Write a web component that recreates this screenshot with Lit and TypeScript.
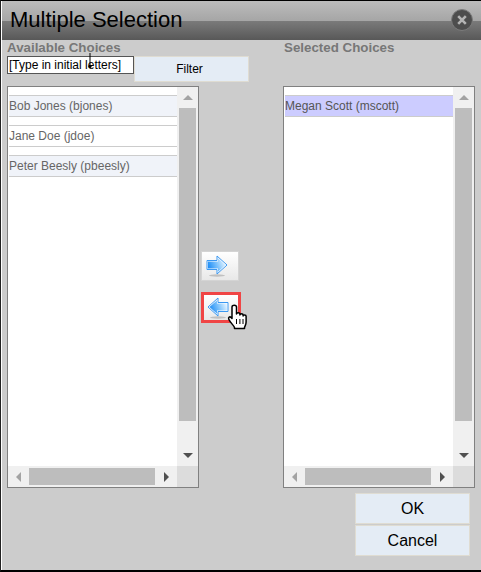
import { LitElement, html, css, svg } from "lit";
import { customElement } from "lit/decorators.js";

const tri = (dir: string, fill: string) => {
  const pts: Record<string, string> = {
    up: "1,7 6,2 11,7",
    down: "1,2 6,7 11,2",
    left: "7,1 2,6 7,11",
    right: "2,1 7,6 2,11",
  };
  const vertical = dir === "up" || dir === "down";
  return html`<svg class="tri" width="${vertical ? 12 : 9}" height="${vertical ? 9 : 12}">${svg`<polygon points=${pts[dir]} fill=${fill}></polygon>`}</svg>`;
};

const arrow = (left: boolean) => {
  const id = left ? "gl" : "gr";
  const outer = left
    ? "22,6.5 12,6.5 12,2 2,11 12,20 12,15.5 22,15.5"
    : "2,6.5 12,6.5 12,2 22,11 12,20 12,15.5 2,15.5";
  const inner = left
    ? "21,7.5 11,7.5 11,4.2 3.5,11 11,17.8 11,14.5 21,14.5"
    : "3,7.5 13,7.5 13,4.2 20.5,11 13,17.8 13,14.5 3,14.5";
  return html`<svg class="arrow" width="24" height="24" viewBox="0 0 24 24">
    <defs>
      <linearGradient id=${id} x1="0" y1="0.6" x2="1" y2="0.3">
        <stop offset="0" stop-color="#1c8cf5"></stop>
        <stop offset="0.5" stop-color="#7cc2fc"></stop>
        <stop offset="1" stop-color="#eaf6ff"></stop>
      </linearGradient>
    </defs>
    <ellipse cx="12" cy="21.5" rx="8" ry="1.2" fill="#c0c0c0"></ellipse>
    <polygon points=${outer} fill="#fff" stroke="#3a98f2" stroke-width="1" stroke-linejoin="round"></polygon>
    <polygon points=${inner} fill="url(#${id})"></polygon>
  </svg>`;
};

@customElement("app-root")
export class AppRoot extends LitElement {
  static styles = css`
    :host {
      display: block;
      width: 481px;
      height: 572px;
      font-family: "Liberation Sans", Arial, sans-serif;
    }
    * {
      box-sizing: border-box;
    }
    .frame {
      position: relative;
      width: 481px;
      height: 572px;
      background: #cccccc;
      border-top: 1px solid #000;
      border-bottom: 2px solid #000;
      border-left: 1px solid #222;
      padding-left: 1px;
      box-shadow: inset 1px 0 0 #fff;
      display: flex;
      flex-direction: column;
    }
    .title {
      height: 39px;
      flex: none;
      display: flex;
      align-items: center;
      justify-content: space-between;
      padding: 0 8px 1px 8px;
      background: linear-gradient(
        #bcbcbc 0,
        #a6a6a6 50%,
        #7a7a7a 52%,
        #585858 100%
      );
    }
    .title h1 {
      margin: 0;
      font-size: 22px;
      font-weight: 400;
      color: #000;
      line-height: 38px;
    }
    .close {
      width: 22px;
      height: 22px;
      display: block;
    }
    .main {
      display: grid;
      grid-template-columns: 192px 84px 192px;
      padding: 0 0 0 5px;
      flex: none;
      height: 449px;
    }
    .col {
      display: flex;
      flex-direction: column;
      min-width: 0;
    }
    .label {
      font-size: 13.33px;
      font-weight: 700;
      color: #777777;
      height: 16px;
      line-height: 16px;
    }
    .right .label {
      margin-left: 1px;
    }
    .filter {
      display: flex;
      height: 30px;
    }
    .filter input {
      flex: none;
      width: 127px;
      height: 18px;
      border: 1px solid #555;
      background: #fff;
      padding: 0 1px;
      margin: 0;
      font: 12px "Liberation Sans", Arial, sans-serif;
      color: #000;
      outline: none;
    }
    .btn {
      border: 1px solid #dfdcd2;
      background: #e4ecf5;
      color: #000;
      font-family: "Liberation Sans", Arial, sans-serif;
      padding: 0;
      margin: 0;
    }
    .filter .btn {
      flex: none;
      width: 115px;
      height: 26px;
      font-size: 12px;
      padding-right: 4px;
    }
    .list {
      height: 402px;
      border: 1px solid #808080;
      background: #fff;
      display: grid;
      grid-template-columns: 169px 21px;
      grid-template-rows: 379px 21px;
    }
    .items {
      padding-top: 8px;
      display: flex;
      flex-direction: column;
      gap: 8px;
    }
    .item {
      height: 22px;
      border-top: 1px solid #cccccc;
      border-bottom: 1px solid #cccccc;
      font-size: 12px;
      line-height: 20px;
      color: #666666;
      margin-left: 1px;
    }
    .item.alt {
      background: #f0f3f9;
    }
    .item.sel {
      background: #ccccff;
      color: #555555;
    }
    .vbar {
      background: #f0f0f0;
      display: flex;
      flex-direction: column;
      align-items: center;
    }
    .hbar {
      background: #f0f0f0;
      display: flex;
      align-items: center;
    }
    .corner {
      background: #dcdcdc;
    }
    .tri {
      display: block;
      flex: none;
    }
    .vbar .cap {
      height: 21px;
      width: 100%;
      display: flex;
      align-items: center;
      justify-content: center;
    }
    .vbar .thumb {
      width: 17px;
      height: 313px;
      background: #bdbdbd;
    }
    .vbar .fill {
      flex: 1;
    }
    .hbar .cap {
      width: 21px;
      height: 100%;
      display: flex;
      align-items: center;
      justify-content: center;
    }
    .hbar .thumb {
      width: 126px;
      height: 17px;
      background: #bdbdbd;
    }
    .hbar .fill {
      flex: 1;
    }
    .mid {
      display: flex;
      flex-direction: column;
      align-items: flex-start;
      padding: 211px 0 0 2px;
      gap: 11px;
    }
    .move {
      width: 38px;
      height: 30px;
      border: 1px solid #d4d4d4;
      background: linear-gradient(#ffffff, #e8e8e8);
      padding: 0 0 1px 3px;
      margin: 0;
      display: flex;
      align-items: center;
      justify-content: flex-start;
    }
    .arrow {
      display: block;
      flex: none;
    }
    .move.hot {
      width: 40px;
      height: 31px;
      border: 3px solid #f04545;
      padding: 0 0 0 2px;
    }
    .actions {
      display: flex;
      flex-direction: column;
      align-items: flex-end;
      padding: 4px 11px 0 0;
      gap: 1px;
    }
    .actions .btn {
      width: 115px;
      height: 31px;
      font-size: 16px;
    }
    .ibeam {
      position: absolute;
      left: 85px;
      top: 51px;
    }
    .hand {
      position: absolute;
      left: 226px;
      top: 303px;
    }
  `;

  private vbar() {
    return html`<div class="vbar">
      <div class="cap">${tri("up", "#a3a3a3")}</div>
      <div class="thumb"></div>
      <div class="fill"></div>
      <div class="cap">${tri("down", "#505050")}</div>
    </div>`;
  }

  private hbar() {
    return html`<div class="hbar">
      <div class="cap">${tri("left", "#a3a3a3")}</div>
      <div class="thumb"></div>
      <div class="fill"></div>
      <div class="cap">${tri("right", "#505050")}</div>
    </div>`;
  }

  render() {
    return html`<div class="frame">
      <div class="title">
        <h1>Multiple Selection</h1>
        <svg class="close" viewBox="0 0 22 22">
          <circle cx="11" cy="11" r="10.5" fill="#4d4d4d" stroke="#7c7c7c"></circle>
          <path d="M7.2 7.2l7.6 7.6M14.8 7.2l-7.6 7.6" stroke="#b4b4b4" stroke-width="2.6"></path>
        </svg>
      </div>
      <div class="main">
        <div class="col">
          <div class="label">Available Choices</div>
          <div class="filter">
            <input value="[Type in initial letters]" />
            <button class="btn">Filter</button>
          </div>
          <div class="list">
            <div class="items">
              <div class="item alt">Bob Jones (bjones)</div>
              <div class="item">Jane Doe (jdoe)</div>
              <div class="item alt">Peter Beesly (pbeesly)</div>
            </div>
            ${this.vbar()} ${this.hbar()}
            <div class="corner"></div>
          </div>
        </div>
        <div class="mid">
          <button class="move">${arrow(false)}</button>
          <button class="move hot">${arrow(true)}</button>
        </div>
        <div class="col right">
          <div class="label">Selected Choices</div>
          <div class="filter"></div>
          <div class="list">
            <div class="items">
              <div class="item sel">Megan Scott (mscott)</div>
            </div>
            ${this.vbar()} ${this.hbar()}
            <div class="corner"></div>
          </div>
        </div>
      </div>
      <div class="actions">
        <button class="btn">OK</button>
        <button class="btn">Cancel</button>
      </div>
      <svg class="ibeam" width="8" height="18" viewBox="0 0 8 18">
        <path d="M4 1v13" stroke="#000" stroke-width="1"></path>
        <circle cx="4" cy="14.5" r="1.6" fill="#000"></circle>
      </svg>
      <svg class="hand" width="22" height="26" viewBox="0 0 22 26">
        <path
          d="M5 3c0-2.4 4.5-2.4 4.5 0V10c0-1.8 3.4-1.8 3.4 0v1c0-1.6 3.2-1.6 3.2 0v1c0-1.4 3-1.4 3 .2V18c0 2.6-1 3.6-1.6 5.5v1H7.5v-1C6.5 21 3.5 19 1.8 15.2c-.8-1.8 1-3 2.2-1.8L5 14.5z"
          fill="#fff"
          stroke="#000"
          stroke-width="1.5"
          stroke-linejoin="round"
        ></path>
        <path d="M9.5 15v5M12.9 15v5M16 15v5" stroke="#000" stroke-width="1"></path>
      </svg>
    </div>`;
  }
}
